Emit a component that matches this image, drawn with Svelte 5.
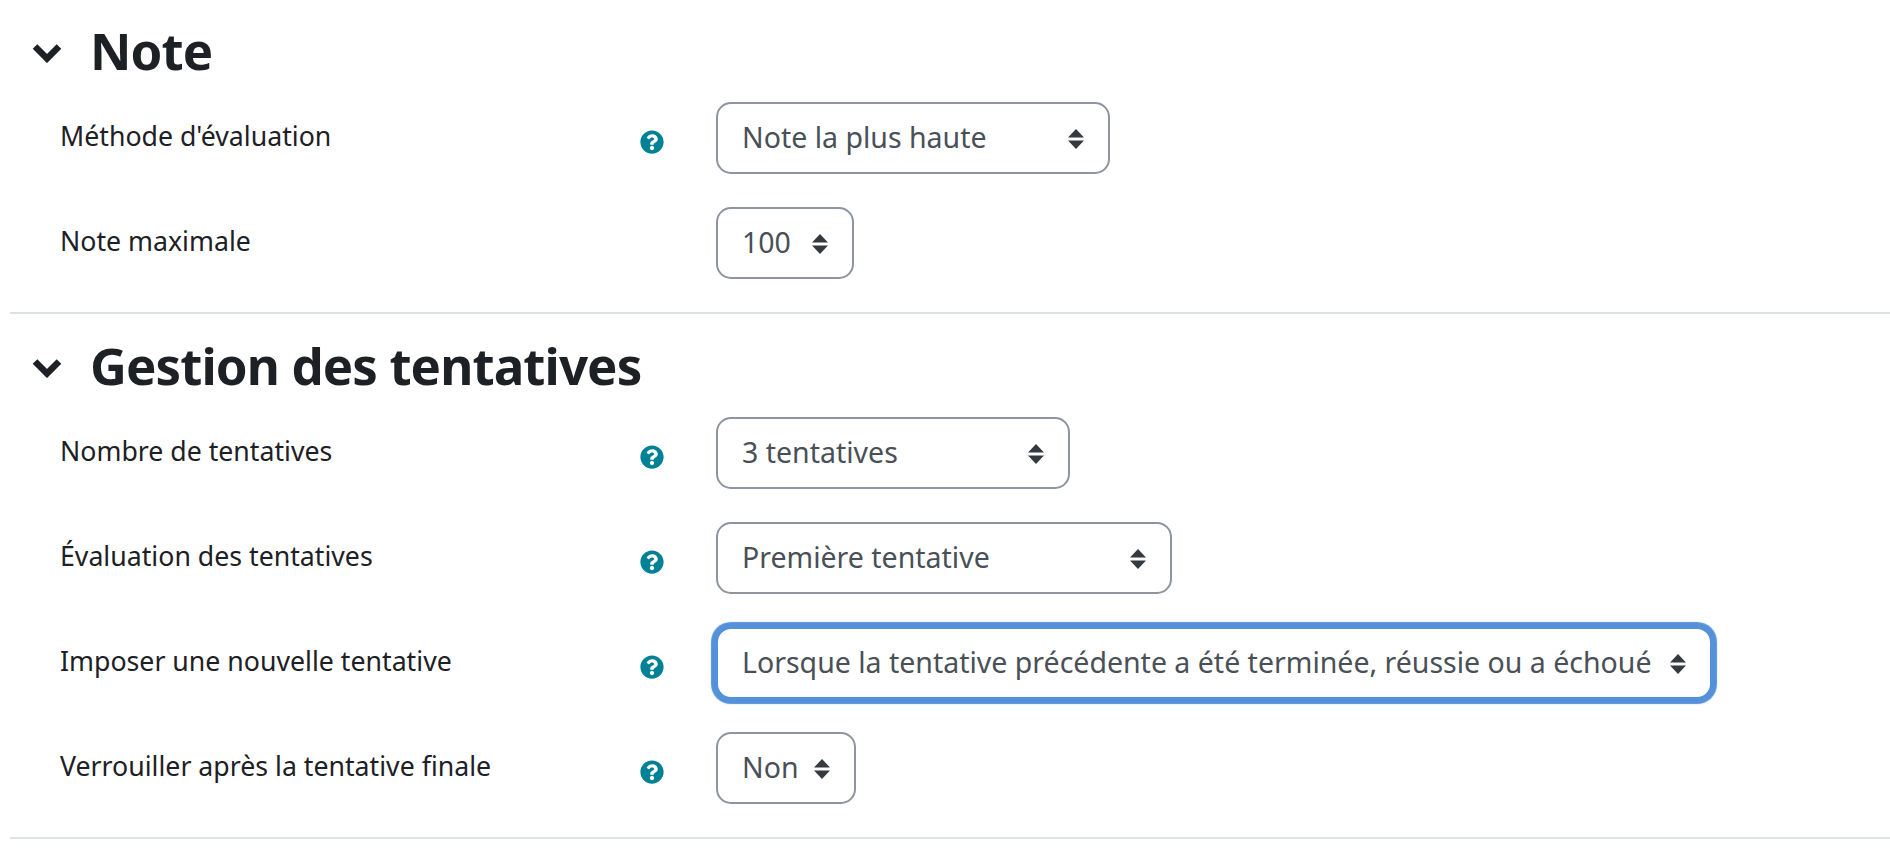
<script>
  const sections = [
    {
      title: 'Note',
      rows: [
        { label: "Méthode d'évaluation", help: true, value: 'Note la plus haute', size: 'w-note' },
        { label: 'Note maximale', help: false, value: '100', size: 'w-max' }
      ]
    },
    {
      title: 'Gestion des tentatives',
      rows: [
        { label: 'Nombre de tentatives', help: true, value: '3 tentatives', size: 'w-count' },
        { label: 'Évaluation des tentatives', help: true, value: 'Première tentative', size: 'w-eval' },
        { label: 'Imposer une nouvelle tentative', help: true, value: 'Lorsque la tentative précédente a été terminée, réussie ou a échoué', size: 'w-force', focus: true },
        { label: 'Verrouiller après la tentative finale', help: true, value: 'Non', size: 'w-lock' }
      ]
    }
  ];
</script>

<main class="page">
  {#each sections as section, s}
    <section class="section" class:first={s === 0}>
      <header class="head">
        <svg class="chevron" viewBox="0 0 30 20" aria-hidden="true">
          <path d="M3 3.5 15 15.5 27 3.5" />
        </svg>
        <h2>{section.title}</h2>
      </header>
      {#each section.rows as row}
        <div class="row">
          <div class="label">{row.label}</div>
          <div class="help">
            {#if row.help}
              <svg viewBox="0 0 512 512" aria-hidden="true">
                <path d="M504 256c0 136.997-111.043 248-248 248S8 392.997 8 256C8 119.083 119.043 8 256 8s248 111.083 248 248zM262.655 90c-54.497 0-89.255 22.957-116.549 63.758-3.536 5.286-2.353 12.415 2.715 16.258l34.699 26.31c5.205 3.947 12.621 3.008 16.665-2.122 17.864-22.658 30.113-35.797 57.303-35.797 20.429 0 45.698 13.148 45.698 32.958 0 14.976-12.363 22.667-32.534 33.976C247.128 238.528 216 254.941 216 296v4c0 6.627 5.373 12 12 12h56c6.627 0 12-5.373 12-12v-1.333c0-28.462 83.186-29.647 83.186-106.667 0-58.002-60.165-102-116.531-102zM256 338c-25.365 0-46 20.635-46 46 0 25.364 20.635 46 46 46s46-20.636 46-46c0-25.365-20.635-46-46-46z" />
              </svg>
            {/if}
          </div>
          <div class="select {row.size}" class:focus={row.focus}>
            <span class="value">{row.value}</span>
            <svg class="arrows" viewBox="0 0 16 20" aria-hidden="true">
              <path d="M8 0 16 8.5H0ZM0 11.5H16L8 20Z" />
            </svg>
          </div>
        </div>
      {/each}
    </section>
  {/each}
</main>

<style>
  :global(body) {
    margin: 0;
    background: #fff;
  }
  .page {
    padding-left: 10px;
    font-family: "Noto Sans", sans-serif;
    color: #1d2125;
  }
  .section {
    border-bottom: 2px solid #dee2e6;
  }
  .head {
    display: flex;
    align-items: center;
    height: 103px;
    padding-left: 22px;
    box-sizing: border-box;
  }
  .first .head {
    height: 102px;
  }
  .chevron {
    width: 30px;
    height: 20px;
    margin: 4px 28px 0 0;
    flex: none;
  }
  .chevron path {
    fill: none;
    stroke: #1d2125;
    stroke-width: 6.5;
  }
  h2 {
    margin: -2px 0 0;
    font-size: 51px;
    font-weight: 700;
    line-height: 60px;
    letter-spacing: -0.9px;
  }
  .row {
    display: flex;
    align-items: center;
    height: 72px;
    margin-bottom: 33px;
    padding-left: 50px;
  }
  .label {
    width: 580px;
    flex: none;
    font-size: 26.7px;
    line-height: 36px;
    margin-top: -5px;
  }
  .help {
    width: 24px;
    height: 24px;
    margin-right: 52px;
    flex: none;
    margin-top: 7px;
  }
  .help svg {
    display: block;
    width: 24px;
    height: 24px;
  }
  .help path {
    fill: #008196;
  }
  .select {
    box-sizing: border-box;
    height: 72px;
    display: flex;
    align-items: center;
    justify-content: space-between;
    padding: 0 24px;
    border: 2px solid #8f959e;
    border-radius: 15px;
    background: #fff;
    font-size: 28.5px;
    color: #495057;
    white-space: nowrap;
  }
  .value {
    margin-bottom: 2px;
  }
  .select.focus {
    border-color: #5491d9;
    box-shadow: 0 0 1px 5px #5491d9;
  }
  .arrows {
    width: 16px;
    height: 20px;
    flex: none;
    margin-top: 2px;
  }
  .arrows path {
    fill: #343a40;
  }
  .w-note { width: 394px; }
  .w-max { width: 138px; }
  .w-count { width: 354px; }
  .w-eval { width: 456px; }
  .w-force { width: 996px; }
  .w-lock { width: 140px; }
</style>
